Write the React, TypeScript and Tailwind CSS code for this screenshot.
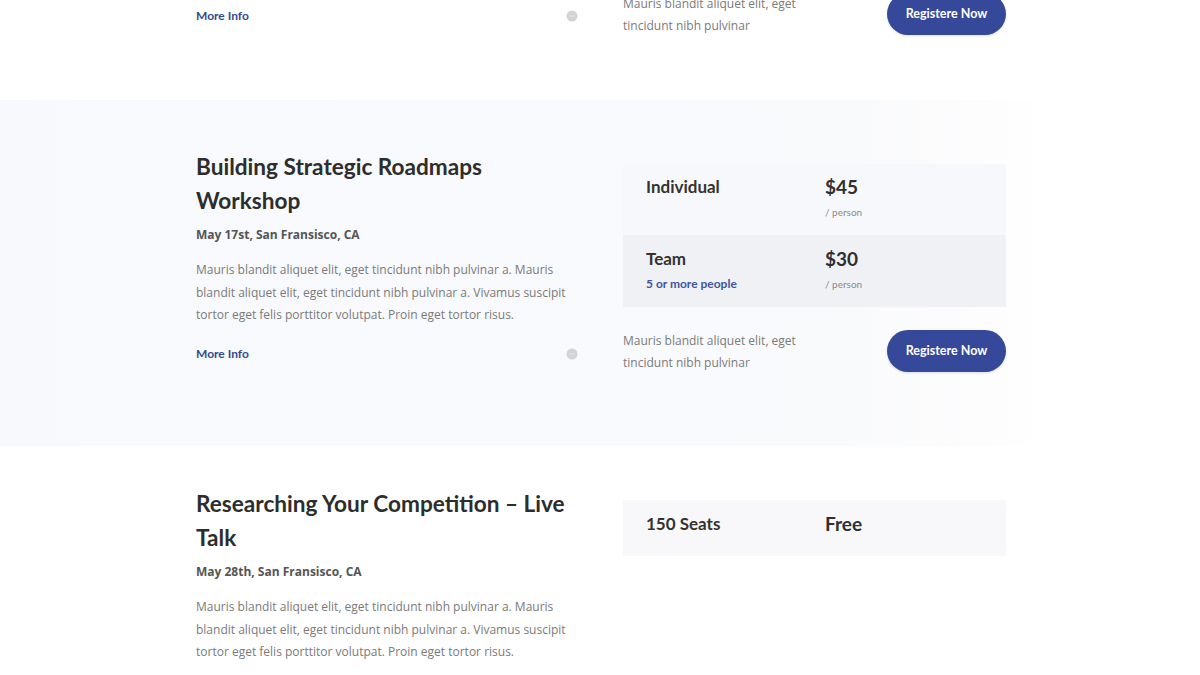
import {ReactNode} from 'react';

const lato = "font-['Lato','Liberation_Sans',sans-serif]";
const open = "font-['Open_Sans','Liberation_Sans',sans-serif]";

const body =
  'Mauris blandit aliquet elit, eget tincidunt nibh pulvinar a. Mauris blandit aliquet elit, eget tincidunt nibh pulvinar a. Vivamus suscipit tortor eget felis porttitor volutpat. Proin eget tortor risus.';

function MoreInfo() {
  return (
    <div className="flex items-center justify-between">
      <a className={`${lato} text-[12px] leading-5 font-bold text-[#34498f]`}>More Info</a>
      <svg width="12" height="12" viewBox="0 0 12 12" className="mr-[2px]">
        <circle cx="6" cy="6" r="5.5" fill="#d3d3d5" />
        <path d="M3.5 6h5" stroke="#e4e4e6" strokeWidth="1.2" />
      </svg>
    </div>
  );
}

function Register() {
  return (
    <div className="flex items-start justify-between">
      <p className={`${open} w-[190px] text-[12px] leading-[22px] text-[#7a7a7a]`}>
        Mauris blandit aliquet elit, eget tincidunt nibh pulvinar
      </p>
      <button
        className={`${lato} h-[42px] w-[119px] rounded-full bg-[#35489a] text-[12.5px] font-bold text-white shadow-sm`}
      >
        Registere Now
      </button>
    </div>
  );
}

function Row({name, sub, price, unit, className}: {name: string; sub?: string; price: string; unit?: string; className: string}) {
  return (
    <div className={`grid grid-cols-[179px_1fr] px-[23px] ${className}`}>
      <div>
        <div className={`${lato} text-[17px] leading-6 font-bold text-[#333]`}>{name}</div>
        {sub && <div className={`${lato} mt-[5px] text-[12px] leading-4 font-bold text-[#3f55a0]`}>{sub}</div>}
      </div>
      <div>
        <div className={`${lato} text-[19px] leading-6 font-bold text-[#2f2f2f]`}>{price}</div>
        {unit && <div className={`${lato} mt-[5px] text-[10px] leading-4 text-[#8a8a8a]`}>{unit}</div>}
      </div>
    </div>
  );
}

function Event({title, date, right, more}: {title: ReactNode; date: string; right: ReactNode; more?: boolean}) {
  return (
    <div className="ml-[196px] grid w-[810px] grid-cols-[384px_383px] items-start gap-x-[43px]">
      <div className="pt-[2px]">
        <h2 className={`${lato} text-[22.6px] leading-[34px] font-bold text-[#2d2d2d]`}>{title}</h2>
        <div className={`${open} mt-[7px] text-[12px] leading-5 font-bold text-[#555]`}>{date}</div>
        <p className={`${open} mt-[14px] text-[12px] leading-[22.5px] text-[#7a7a7a]`}>{body}</p>
        {more && (
          <div className="mt-[17px]">
            <MoreInfo />
          </div>
        )}
      </div>
      <div className="pt-[16px]">{right}</div>
    </div>
  );
}

export default function App() {
  return (
    <div className="h-[675px] w-[1200px] overflow-hidden bg-white">
      <section className="-mt-[7px] pb-[63px]">
        <div className="ml-[196px] grid w-[810px] grid-cols-[384px_383px] items-start gap-x-[43px]">
          <div className="pt-[13px]">
            <MoreInfo />
          </div>
          <Register />
        </div>
      </section>

      <section className="bg-[linear-gradient(to_right,#f7f9fc_0%,#f9fafc_70%,#fcfcfd_80%,#ffffff_88%)] pt-[48px] pb-[72px]">
        <Event
          title="Building Strategic Roadmaps Workshop"
          date="May 17st, San Fransisco, CA"
          more
          right={
            <>
              <div>
                <Row className="h-[71px] bg-[#f7f8fb] pt-[11px]" name="Individual" price="$45" unit="/ person" />
                <Row
                  className="h-[72px] bg-[#eff1f5] pt-[12px]"
                  name="Team"
                  sub="5 or more people"
                  price="$30"
                  unit="/ person"
                />
              </div>
              <div className="mt-[23px]">
                <Register />
              </div>
            </>
          }
        />
      </section>

      <section className="pt-[39px]">
        <Event
          title="Researching Your Competition – Live Talk"
          date="May 28th, San Fransisco, CA"
          right={
            <div className="-mt-px">
              <Row className="h-[56px] bg-[#f8f8fb] pt-[12px]" name="150 Seats" price="Free" />
            </div>
          }
        />
      </section>
    </div>
  );
}
